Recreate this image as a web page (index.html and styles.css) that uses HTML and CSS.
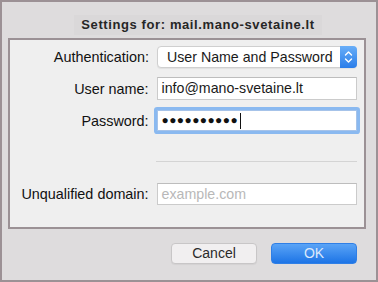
FILE: index.html
```html
<!DOCTYPE html>
<html lang="en">
<head>
    <meta charset="UTF-8">
    <title>Settings for: mail.mano-svetaine.lt</title>
    <link rel="stylesheet" href="styles.css">
</head>
<body>
    <div class="window">
        <h1 class="title">Settings for: mail.mano-svetaine.lt</h1>

        <div class="panel">
            <div class="row row-auth">
                <label class="label">Authentication:</label>
                <div class="popup">
                    <span class="popup-text">User Name and Password</span>
                    <span class="stepper">
                        <svg width="9" height="14" viewBox="0 0 9 14">
                            <path d="M1.5 5 L4.5 2 L7.5 5 M1.5 9 L4.5 12 L7.5 9" fill="none" stroke="#fff" stroke-width="1.4" stroke-linecap="round" stroke-linejoin="round"/>
                        </svg>
                    </span>
                </div>
            </div>

            <div class="row row-user">
                <label class="label">User name:</label>
                <div class="field">info@mano-svetaine.lt</div>
            </div>

            <div class="row row-pass">
                <label class="label">Password:</label>
                <div class="field focused"><span class="dots">●●●●●●●●●●</span><span class="caret"></span></div>
            </div>

            <div class="separator"></div>

            <div class="row row-domain">
                <label class="label">Unqualified domain:</label>
                <div class="field placeholder">example.com</div>
            </div>
        </div>

        <div class="buttons">
            <button class="btn btn-cancel">Cancel</button>
            <button class="btn btn-ok">OK</button>
        </div>
    </div>
</body>
</html>
```

FILE: styles.css
```css
* {
    margin: 0;
    padding: 0;
    box-sizing: border-box;
    font-family: 'Liberation Sans', Arial, sans-serif;
}

body {
    background: #dedcdd;
}

.window {
    width: 378px;
    height: 282px;
    border: 2px solid #9c9195;
    background: #dedcdd;
    display: flex;
    flex-direction: column;
}

.title {
    align-self: center;
    margin: 13px 0 0 18px;
    padding: 2px 7px;
    background: #dad8d9;
    font-size: 13px;
    font-weight: 700;
    letter-spacing: 0.6px;
    line-height: 16px;
    color: #262626;
}

.panel {
    margin: 3px 10px 0 6px;
    height: 191px;
    border: 2px solid #9b9195;
    background: #efefef;
    padding: 6px 7px 0 0;
    display: flex;
    flex-direction: column;
}

.row {
    display: flex;
    align-items: center;
}

.label {
    width: 139px;
    text-align: right;
    font-size: 14.4px;
    color: #111;
    margin-right: 8px;
}

.popup {
    width: 200px;
    height: 22px;
    background: #fff;
    border: 1px solid #cfcfcf;
    border-radius: 4px;
    display: flex;
    align-items: center;
    justify-content: space-between;
    box-shadow: 0 1px 1px rgba(0, 0, 0, 0.06);
}

.popup-text {
    padding-left: 9px;
    font-size: 14.2px;
    color: #1a1a1a;
}

.stepper {
    width: 17px;
    height: 22px;
    margin-right: -1px;
    border-radius: 0 4px 4px 0;
    background: linear-gradient(#68aef8, #2a7de9);
    display: flex;
    align-items: center;
    justify-content: center;
}

.field {
    width: 201px;
    height: 23px;
    background: #fff;
    border: 1px solid #cbcbcb;
    border-top-color: #bdbdbd;
    padding-left: 4px;
    font-size: 14.2px;
    line-height: 21px;
    color: #1a1a1a;
    display: flex;
    align-items: center;
}

.row-user {
    margin-top: 9px;
}

.row-pass {
    margin-top: 10px;
}

.field.focused {
    height: 21px;
    border-color: #a6c3e9;
    box-shadow: 0 0 0 3px #8ab9f0;
    border-radius: 1px;
}

.dots {
    font-size: 12px;
    letter-spacing: 0.4px;
    color: #111;
}

.caret {
    width: 1px;
    height: 16px;
    margin-left: 2px;
    background: #111;
}

.separator {
    margin: 30px 0 0 146px;
    height: 1px;
    background: #d4d4d4;
    width: 201px;
}

.row-domain {
    margin-top: 21px;
}

.field.placeholder {
    color: #b8b8b8;
    height: 22px;
}

.buttons {
    display: flex;
    justify-content: flex-end;
    gap: 14px;
    margin: 14px 19px 0 0;
}

.btn {
    width: 86px;
    height: 21px;
    border-radius: 4px;
    font-size: 14px;
    line-height: 19px;
}

.btn-cancel {
    background: #f1eff0;
    border: 1px solid #c8c6c7;
    color: #2a2a2a;
    box-shadow: 0 1px 1px rgba(0, 0, 0, 0.05);
}

.btn-ok {
    background: linear-gradient(#5aa4f6, #1d74e6);
    border: 1px solid #2f7fe6;
    color: #dce9fb;
}
```
